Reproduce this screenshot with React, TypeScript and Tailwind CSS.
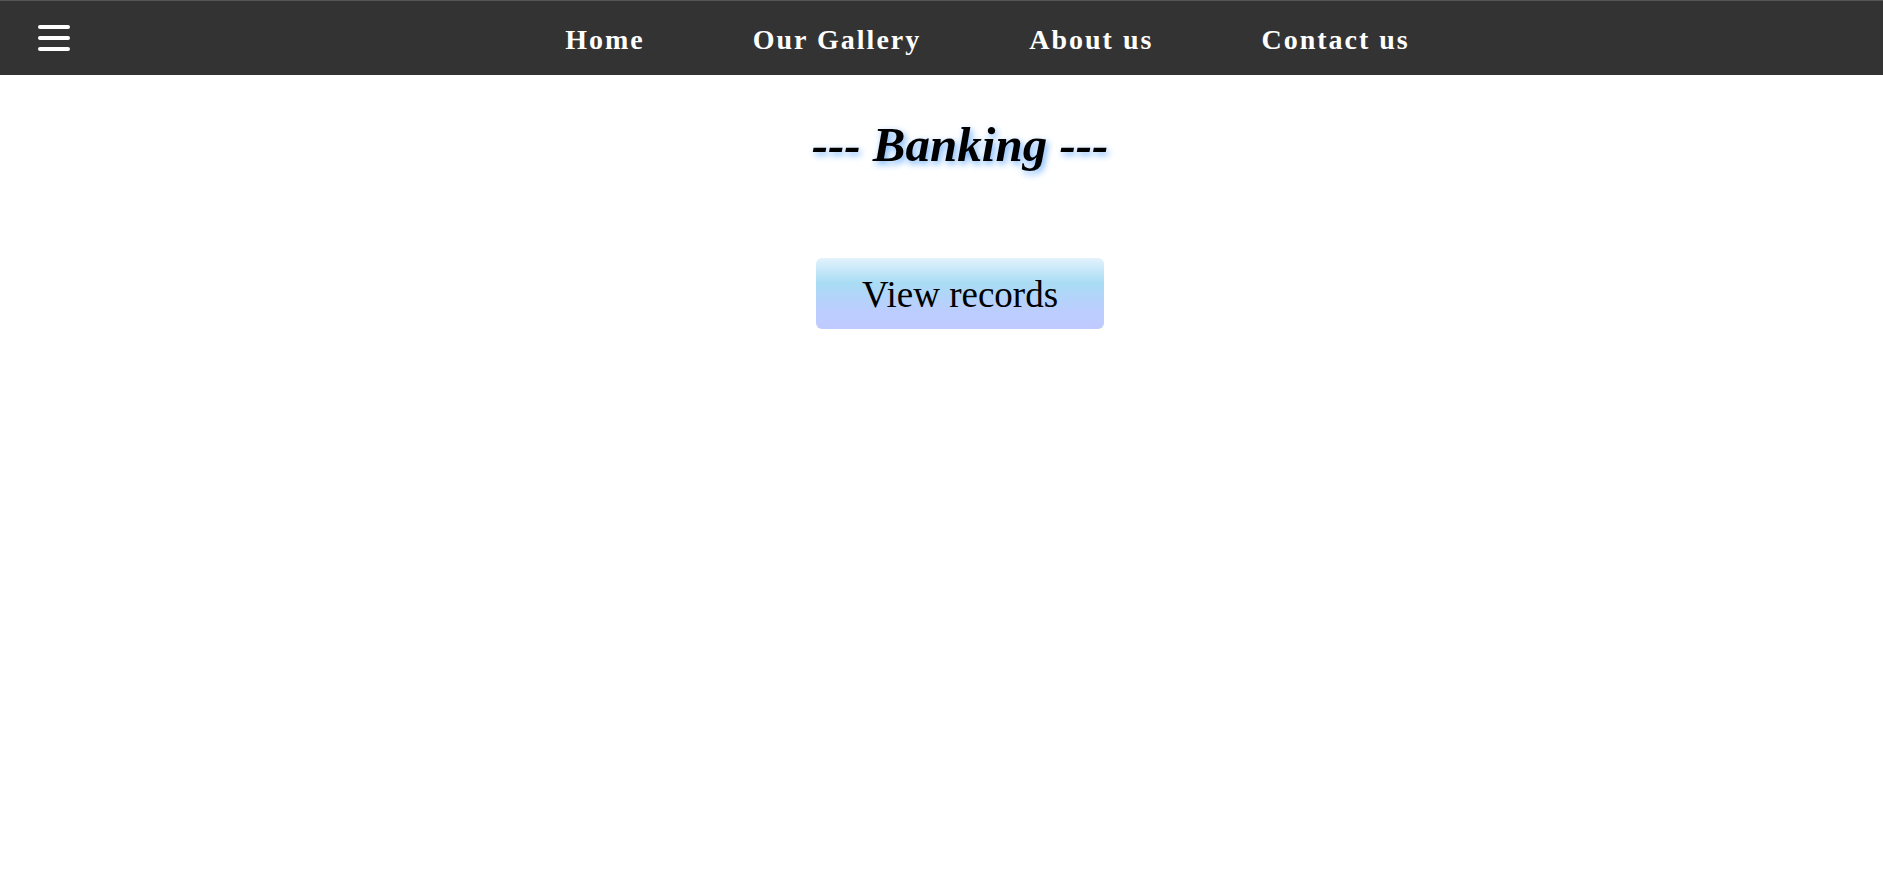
import React from "react";

export default function App() {
  const serif = "font-['Liberation_Serif','Times_New_Roman',serif]";
  const items = ["Home", "Our Gallery", "About us", "Contact us"];
  return (
    <div className={`min-h-[879px] w-full bg-white ${serif}`}>
      <nav className="flex h-[75px] w-full items-center border-t border-[#555555] bg-[#333333]">
        <div className="flex w-[92px] shrink-0 flex-col gap-[7px] pl-[38px]">
          <span className="block h-[4px] w-[32px] rounded-full bg-white" />
          <span className="block h-[4px] w-[32px] rounded-full bg-white" />
          <span className="block h-[4px] w-[32px] rounded-full bg-white" />
        </div>
        <ul className="flex flex-1 items-center justify-center gap-[108px] pt-[6px]">
          {items.map((t) => (
            <li key={t}>
              <a className="text-[28px] font-bold leading-none tracking-[2px] text-white">{t}</a>
            </li>
          ))}
        </ul>
      </nav>
      <main className="flex flex-col items-center pl-[37px]">
        <h1 className="mt-[45px] text-[49px] font-bold italic leading-none text-black [text-shadow:2px_3px_7px_#6fb0ff]">
          --- Banking ---
        </h1>
        <button className="mt-[89px] flex h-[71px] w-[288px] items-center justify-center rounded-[6px] bg-[linear-gradient(to_bottom,#e2f2fc_0%,#a9dcf4_35%,#bccdff_75%,#c0caff_100%)] pt-[2px] text-[37px] leading-none text-black">
          View records
        </button>
      </main>
    </div>
  );
}
